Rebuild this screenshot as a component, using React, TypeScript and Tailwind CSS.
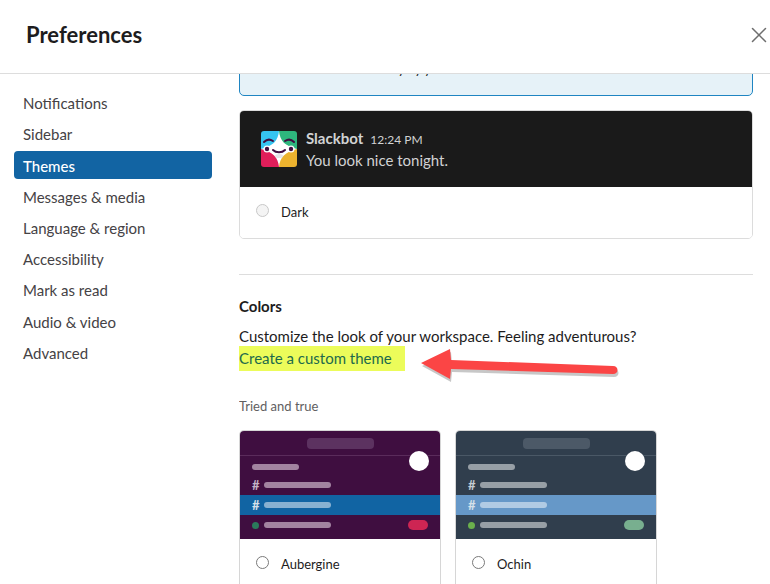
import { X } from "lucide-react";

const navItems = [
  "Notifications",
  "Sidebar",
  "Themes",
  "Messages & media",
  "Language & region",
  "Accessibility",
  "Mark as read",
  "Audio & video",
  "Advanced",
];

const themes = [
  {
    name: "Aubergine",
    rail: "bg-[#3f0e40]",
    line: "border-[#5a2b5b]",
    top: "bg-[#5c3260]",
    bar: "bg-[#a283a0]",
    active: "bg-[#1164a3]",
    activeBar: "bg-[#88b1d1]",
    hash: "text-[#c4b4c5]",
    dot: "bg-[#2b7a5b]",
    badge: "bg-[#cd2553]",
  },
  {
    name: "Ochin",
    rail: "bg-[#303e4d]",
    line: "border-[#4a5866]",
    top: "bg-[#4c5967]",
    bar: "bg-[#979fa6]",
    active: "bg-[#6698c8]",
    activeBar: "bg-[#b1cbe4]",
    hash: "text-[#c5cbd1]",
    dot: "bg-[#6ab04c]",
    badge: "bg-[#78af8f]",
  },
];

function SlackbotLogo() {
  return (
    <svg viewBox="0 0 36 36" className="h-9 w-9 shrink-0 rounded-[3px]">
      <rect width="18" height="18" fill="#36c5f0" />
      <rect x="18" width="18" height="18" fill="#2eb67d" />
      <rect y="18" width="18" height="18" fill="#e01e5a" />
      <rect x="18" y="18" width="18" height="18" fill="#ecb22e" />
      <path d="M18 0 C19 10 24 15 36 18 C24 21 19 26 18 36 C17 26 12 21 0 18 C12 15 17 10 18 0Z" fill="#fff" />
      <path d="M3 11 C6 8 9 8 12 10" stroke="#3f0e40" strokeWidth="2" strokeLinecap="round" fill="none" />
      <path d="M24 10 C27 8 30 8 33 11" stroke="#3f0e40" strokeWidth="2" strokeLinecap="round" fill="none" />
      <circle cx="6" cy="18" r="3.5" fill="#fff" />
      <circle cx="30" cy="18" r="3.5" fill="#fff" />
      <circle cx="6" cy="18" r="2.2" fill="#3f0e40" />
      <circle cx="30" cy="18" r="2.2" fill="#3f0e40" />
      <path d="M12 19 C15 22 21 22 24 19" stroke="#3f0e40" strokeWidth="2" strokeLinecap="round" fill="none" />
      <ellipse cx="18" cy="25" rx="4" ry="2" fill="#e4e4e8" />
    </svg>
  );
}

function Radio({ muted }: { muted?: boolean }) {
  return (
    <span
      className={
        muted
          ? "-mt-[5px] block h-[13px] w-[13px] shrink-0 rounded-full border border-[#c8c8c8] bg-[#f4f4f4]"
          : "-mt-[5px] block h-[13px] w-[13px] shrink-0 rounded-full border border-[#7a7a7a] bg-white"
      }
    />
  );
}

function ThemeCard({ theme }: { theme: (typeof themes)[number] }) {
  return (
    <div className="h-[170px] w-[202px] shrink-0 overflow-hidden rounded-t-[5px] border border-b-0 border-[#d6d6d6]">
      <div className={`relative h-[108px] ${theme.rail}`}>
        <div className={`flex h-[25px] items-center justify-center border-b ${theme.line}`}>
          <div className={`h-[11px] w-[67px] rounded-[4px] ${theme.top}`} />
        </div>
        <div className="absolute right-[11px] top-[20px] h-[20px] w-[20px] rounded-full bg-white" />
        <div className="flex h-[22px] items-center pl-3">
          <div className={`h-[6px] w-[47px] rounded-full ${theme.bar}`} />
        </div>
        <div className="flex h-[14px] items-center pl-3">
          <span className={`w-3 text-[13px] font-bold leading-none ${theme.hash}`}>#</span>
          <div className={`h-[6px] w-[67px] rounded-full ${theme.bar}`} />
        </div>
        <div className={`mt-[3px] flex h-[20px] items-center pl-3 ${theme.active}`}>
          <span className="w-3 text-[13px] font-bold leading-none text-[#d5e0ea]">#</span>
          <div className={`h-[6px] w-[67px] rounded-full ${theme.activeBar}`} />
        </div>
        <div className="flex h-[20px] items-center justify-between px-3">
          <div className="flex items-center">
            <span className={`mr-[5px] h-[7px] w-[7px] rounded-full ${theme.dot}`} />
            <div className={`h-[6px] w-[67px] rounded-full ${theme.bar}`} />
          </div>
          <div className={`h-[10px] w-[20px] rounded-full ${theme.badge}`} />
        </div>
      </div>
      <div className="flex h-[52px] items-center gap-[12px] bg-white pl-4 text-[13px] text-[#1d1c1d]">
        <Radio />
        <span>{theme.name}</span>
      </div>
    </div>
  );
}

export default function App() {
  return (
    <div className="relative h-[584px] w-[770px] overflow-hidden bg-white font-['Lato',sans-serif] text-[#1d1c1d]">
      <header className="flex h-[74px] items-center justify-between border-b border-[#dddddd] pl-[26px]">
        <h1 className="-mt-[4px] text-[22px] font-bold leading-none">Preferences</h1>
        <X className="-mr-[2px] mt-[-4px] text-[#6e6e6e]" size={26} strokeWidth={1.4} />
      </header>

      <div className="flex h-[510px]">
        <nav className="flex w-[239px] shrink-0 flex-col gap-[3.2px] pl-[14px] pr-[27px] pt-[15px]">
          {navItems.map((item) => (
            <div
              key={item}
              className={
                item === "Themes"
                  ? "flex h-[28px] items-center rounded-[4px] bg-[#1264a3] pl-[9px] pt-[1px] text-[15px] font-medium text-white"
                  : "flex h-[28px] items-center pl-[9px] pt-[1px] text-[15px] text-[#454245]"
              }
            >
              {item}
            </div>
          ))}
        </nav>

        <main className="w-[514px] min-w-0 shrink-0 overflow-hidden">
          <div className="-mt-[24px] h-[46px] rounded-b-[5px] border border-[#1f85c2] bg-[#e6f2f8] pl-[42px] pt-[12px] text-[13px] leading-none text-[#1d1c1d]">
            Chosen automatically by your OS
          </div>

          <div className="mt-[14px] h-[129px] overflow-hidden rounded-[5px] border border-[#dcdcdc]">
            <div className="flex h-[76px] gap-[9px] bg-[#1a1a1a] pl-[21px] pt-[20px]">
              <SlackbotLogo />
              <div className="text-[#d1d2d3]">
                <div className="-mt-[1px] flex items-baseline gap-[7px] leading-[17px]">
                  <span className="text-[15px] font-bold">Slackbot</span>
                  <span className="text-[12px]">12:24 PM</span>
                </div>
                <p className="mt-[2px] text-[15px] leading-[20px]">You look nice tonight.</p>
              </div>
            </div>
            <div className="flex h-[52px] items-center gap-[12px] bg-white pl-4 text-[13px]">
              <Radio muted />
              <span>Dark</span>
            </div>
          </div>

          <div className="mt-[35px] border-t border-[#dddddd] pt-[22px]">
            <h2 className="text-[15px] font-bold leading-[18px]">Colors</h2>
            <p className="mt-[11px] text-[15px] leading-[21px]">Customize the look of your workspace. Feeling adventurous?</p>
            <a className="-ml-[5px] -mt-[1px] block h-[25px] w-[171px] bg-[#ecfc5a] pl-[5px] text-[15px] leading-[25px] text-[#1d6a4c]">
              Create a custom theme
            </a>
            <h3 className="mt-[27px] text-[13px] leading-[16px] text-[#616061]">Tried and true</h3>
            <div className="mt-[16px] flex gap-[14px]">
              {themes.map((theme) => (
                <ThemeCard key={theme.name} theme={theme} />
              ))}
            </div>
          </div>
        </main>
      </div>

      {/* annotation arrow pasted over the screenshot */}
      <svg className="absolute left-[410px] top-[340px] h-[50px] w-[220px]" viewBox="0 0 220 50">
        <path
          d="M11 23 L40 9 L41 20 L203 26 C209 26 209 34 203 34 L41 29 L40 39 Z"
          fill="#000"
          opacity="0.22"
          transform="translate(1 3)"
        />
        <path d="M11 23 L40 9 L41 20 L203 26 C209 26 209 34 203 34 L41 29 L40 39 Z" fill="#fb4545" />
      </svg>
    </div>
  );
}
